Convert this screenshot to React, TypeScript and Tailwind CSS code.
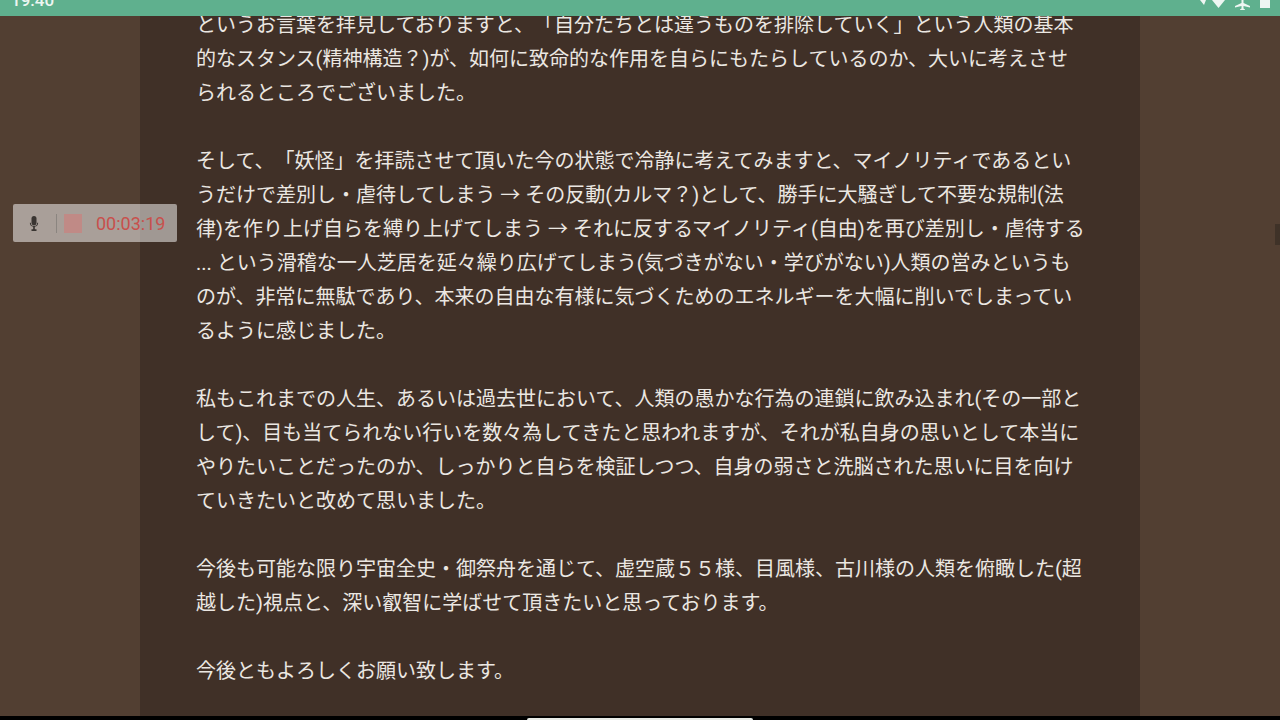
const paragraphs = [
  ["というお言葉を拝見しておりますと、「自分たちとは違うものを排除していく」という人類の基本", "的なスタンス(精神構造？)が、如何に致命的な作用を自らにもたらしているのか、大いに考えさせ", "られるところでございました。"],
  ["そして、「妖怪」を拝読させて頂いた今の状態で冷静に考えてみますと、マイノリティであるとい", "うだけで差別し・虐待してしまう → その反動(カルマ？)として、勝手に大騒ぎして不要な規制(法", "律)を作り上げ自らを縛り上げてしまう → それに反するマイノリティ(自由)を再び差別し・虐待する", "... という滑稽な一人芝居を延々繰り広げてしまう(気づきがない・学びがない)人類の営みというも", "のが、非常に無駄であり、本来の自由な有様に気づくためのエネルギーを大幅に削いでしまってい", "るように感じました。"],
  ["私もこれまでの人生、あるいは過去世において、人類の愚かな行為の連鎖に飲み込まれ(その一部と", "して)、目も当てられない行いを数々為してきたと思われますが、それが私自身の思いとして本当に", "やりたいことだったのか、しっかりと自らを検証しつつ、自身の弱さと洗脳された思いに目を向け", "ていきたいと改めて思いました。"],
  ["今後も可能な限り宇宙全史・御祭舟を通じて、虚空蔵５５様、目風様、古川様の人類を俯瞰した(超", "越した)視点と、深い叡智に学ばせて頂きたいと思っております。"],
  ["今後ともよろしくお願い致します。"],
]

export default function App() {
  return (
    <div className="relative h-[720px] w-[1280px] overflow-hidden flex flex-col bg-[#523f32] font-['Roboto','Noto_Sans_CJK_JP',sans-serif]">
      <div className="h-4 shrink-0 bg-[#5fb08e] overflow-hidden flex items-start justify-between pl-[11px] pr-[10px] text-[#eef6f2]">
        <span className="-mt-[10px] text-[17px] leading-[20px] font-medium">19:40</span>
        <div className="flex items-start gap-[10px]">
          <svg viewBox="0 0 27 9" className="w-[27px] h-[9px]" fill="currentColor">
            <path d="M2 0h6l-2 5zM14 0h13l-6.500 8z" />
          </svg>
          <svg viewBox="0 0 15 10" className="w-[15px] h-[10px]" fill="currentColor">
            <path d="M6.500 0h2v3l6.500 3v1.500L8.500 6v2.500l1.500 1V10h-5v-.5l1.500-1V6L0 7.500V6l6.500-3z" />
          </svg>
          <div className="w-[10px] h-2 bg-current" />
        </div>
      </div>
      <div className="flex-1 flex justify-center min-h-0">
        <div className="w-[1000px] bg-[#403027] pl-[56px] overflow-hidden">
          <div className="-mt-2 flex flex-col gap-[34px] text-[#ebe7e2] text-[20px] leading-[34px] [text-spacing-trim:space-all]">
            {paragraphs.map((p, i) => (
              <div key={i}>
                {p.map((line, j) => (
                  <div key={j} className="whitespace-nowrap">{line}</div>
                ))}
              </div>
            ))}
          </div>
        </div>
      </div>
      <div className="h-1 shrink-0 bg-black flex items-end justify-center">
        <div className="w-[226px] h-[2px] bg-[#e8ebe6] rounded-t-sm" />
      </div>
      <div className="absolute left-[13px] top-[204px] w-[164px] h-[38px] bg-white/50 rounded-[2px] flex items-center">
        <svg viewBox="0 0 12 18" className="ml-[16px] w-[10px] h-[15px] text-[#3a3532]" fill="currentColor">
          <rect x="3" y="0" width="6" height="11" rx="3" />
          <path d="M1 8h1.200a3.800 3.800 0 0 0 7.600 0H11a5 5 0 0 1-4 4.800V16h2v2H3v-2h2v-3.200A5 5 0 0 1 1 8z" />
        </svg>
        <div className="ml-[17px] w-px h-[19px] bg-[#8b8580]" />
        <div className="ml-[7px] w-[18px] h-[19px] bg-[#c08a86]" />
        <span className="ml-[14px] text-[18px] text-[#c8504c]">00:03:19</span>
      </div>
      <div className="absolute right-0 top-[224px] w-[5px] h-[21px] bg-[#3f3228]" />
    </div>
  )
}
